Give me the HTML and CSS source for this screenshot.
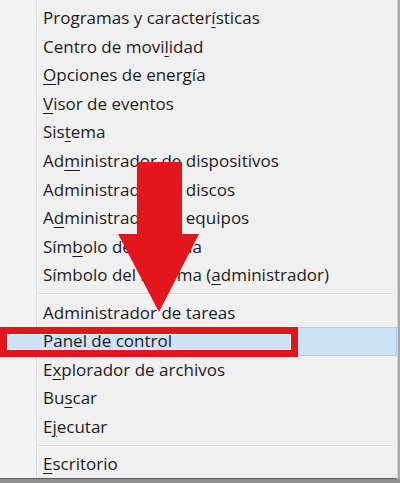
FILE: index.html
```html
<!DOCTYPE html>
<html lang="es">
<head>
    <meta charset="UTF-8">
    <meta name="viewport" content="width=device-width, initial-scale=1.0">
    <title>Menú</title>
    <link rel="stylesheet" href="styles.css">
</head>
<body>
    <!-- Menu -->
    <div class="menu">
        <div class="menu-group">
            <div class="item">Programas y caracter<u>í</u>sticas</div>
            <div class="item">Centro de movi<u>l</u>idad</div>
            <div class="item"><u>O</u>pciones de energía</div>
            <div class="item"><u>V</u>isor de eventos</div>
            <div class="item">Sis<u>t</u>ema</div>
            <div class="item">Ad<u>m</u>inistrador de dispositivos</div>
            <div class="item">Administrador de discos</div>
            <div class="item">A<u>d</u>ministrador de equipos</div>
            <div class="item">Sím<u>b</u>olo del sistema</div>
            <div class="item">Símbolo del sistema (<u>a</u>dministrador)</div>
        </div>
        <div class="separator"></div>
        <div class="menu-group">
            <div class="item">Administrador de tareas</div>
            <div class="item active"><u>P</u>anel de control</div>
            <div class="item">E<u>x</u>plorador de archivos</div>
            <div class="item">Bu<u>s</u>car</div>
            <div class="item">E<u>j</u>ecutar</div>
        </div>
        <div class="separator"></div>
        <div class="menu-group">
            <div class="item"><u>E</u>scritorio</div>
        </div>

        <!-- Annotations -->
        <div class="frame"></div>
        <svg class="arrow" width="90" height="155" viewBox="0 0 90 155">
            <polygon points="21,0 66,0 66,72 83,72 43,150 2,72 21,72" fill="#e3161e"/>
        </svg>
    </div>
</body>
</html>
```

FILE: styles.css
```css
body {
    margin: 0;
    background: #8f8f8f;
    font-family: 'Open Sans', 'Noto Sans', sans-serif;
    height: 483px;
    overflow: hidden;
}

.menu {
    position: relative;
    width: 397px;
    height: 479px;
    box-sizing: border-box;
    padding-top: 4px;
    background: linear-gradient(to right, #f3f3f3 36px, #d9d9d9 36px, #d9d9d9 37px, #fcfcfc 37px, #fcfcfc 38px, #f0f0f0 38px);
    border-bottom: 1px solid #5e5e5e;
    box-shadow: 1px 0 0 #d4d4d4, 3px 0 0 #a9a9a9;
}

.item {
    height: 28.6px;
    line-height: 28.6px;
    padding-left: 43px;
    font-size: 17px;
    color: #1c1c1c;
    white-space: nowrap;
    box-sizing: border-box;
}

.item u {
    text-decoration-thickness: 1px;
    text-underline-offset: 3px;
}

.item.active {
    background: #cde3f6;
    border: 1px solid #a8cdee;
    line-height: 26.6px;
    padding-left: 42px;
}

.separator {
    height: 8.6px;
    margin-left: 38px;
    margin-right: 4px;
    background: linear-gradient(to bottom, transparent 3px, #d6d6d6 3px, #d6d6d6 4px, #ffffff 4px, #ffffff 5px, transparent 5px);
}

.frame {
    position: absolute;
    left: 0;
    top: 327px;
    width: 298px;
    height: 30px;
    box-sizing: border-box;
    border: 7px solid #e2151d;
    box-shadow: inset 0 0 0 1px #ffffff;
}

.arrow {
    position: absolute;
    left: 116px;
    top: 162px;
}
```
